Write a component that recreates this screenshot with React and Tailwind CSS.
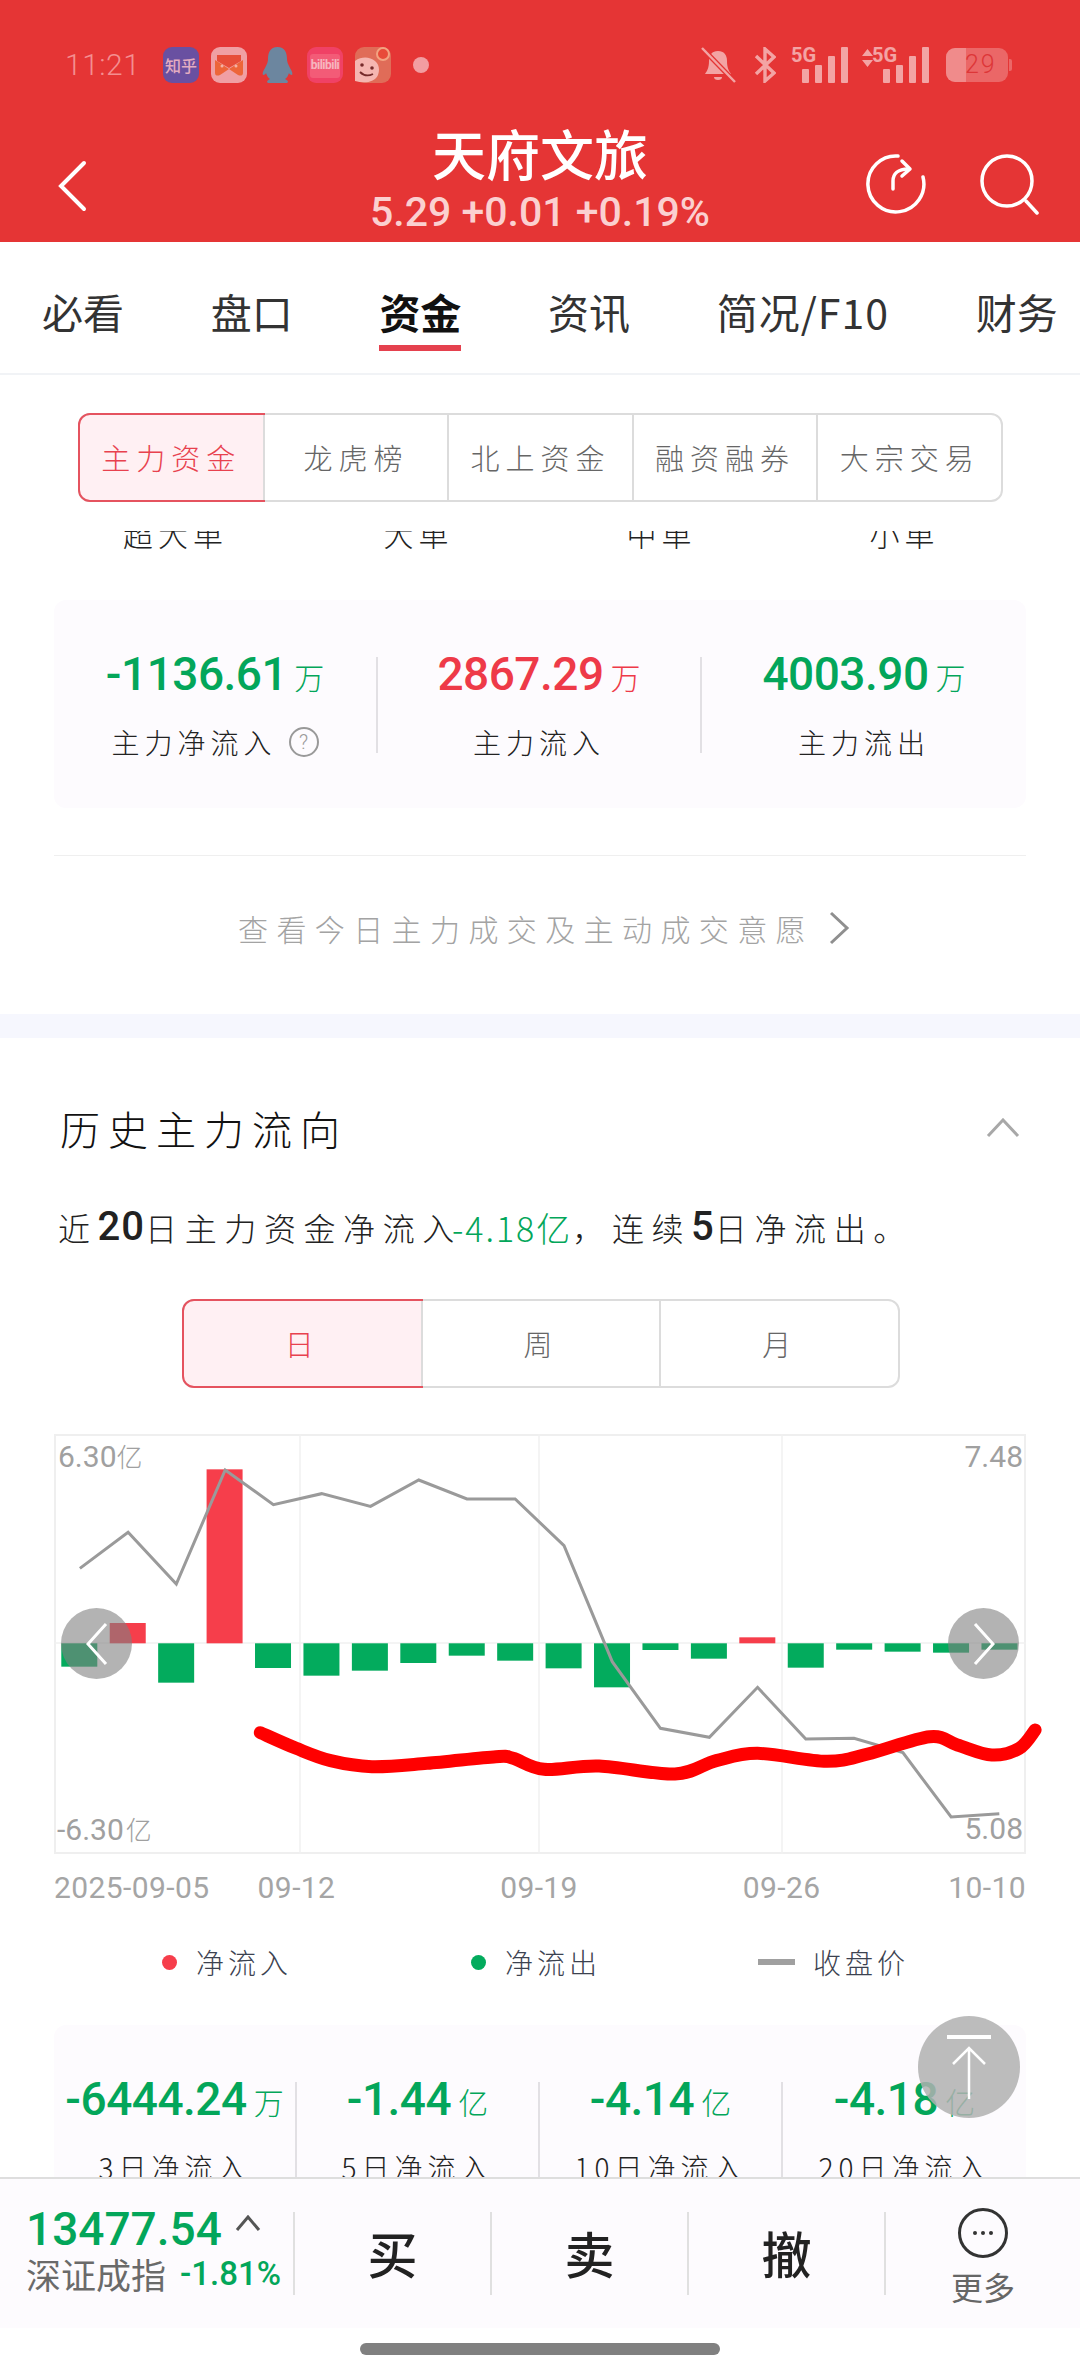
import React from "react";

const cjk = "font-['Noto_Sans_CJK_SC',sans-serif]";
const num = "font-['Roboto','Noto_Sans_CJK_SC',sans-serif]";

// reference coordinates of the chart, mapped into the chart box
const toChart = ([x, y]) => [x / 1.452 - 54, y / 3 - 14];

const bars = [
  ["g", 740], ["r", 609], ["g", 788], ["r", 148], ["g", 744], ["g", 767], ["g", 752],
  ["g", 729], ["g", 707], ["g", 722], ["g", 745], ["g", 802], ["g", 690], ["g", 716],
  ["r", 652], ["g", 743], ["g", 689], ["g", 695], ["g", 698], ["g", 689],
];

const priceLine = [
  [116, 445], [186, 337], [256, 492], [327, 150], [397, 254], [467, 221], [538, 259],
  [608, 180], [678, 237], [748, 237], [819, 377], [889, 725], [959, 925], [1030, 952],
  [1100, 802], [1170, 957], [1240, 955], [1311, 998], [1381, 1191], [1451, 1181],
];

const scribble = [
  [378, 938], [430, 985], [480, 1022], [540, 1040], [620, 1030], [720, 1010], [745, 1015],
  [790, 1048], [870, 1038], [980, 1062], [1040, 1022], [1100, 1000], [1200, 1024],
  [1260, 1002], [1350, 950], [1390, 975], [1440, 1005], [1480, 985], [1503, 930],
];

function smoothPath(points) {
  const p = points.map(toChart);
  let d = `M${p[0][0]} ${p[0][1]}`;
  for (let i = 0; i < p.length - 1; i++) {
    const a = p[i - 1] || p[i];
    const b = p[i];
    const c = p[i + 1];
    const e = p[i + 2] || c;
    d += ` C${b[0] + (c[0] - a[0]) / 6} ${b[1] + (c[1] - a[1]) / 6} ${c[0] - (e[0] - b[0]) / 6} ${c[1] - (e[1] - b[1]) / 6} ${c[0]} ${c[1]}`;
  }
  return d;
}

function Segmented({ items, w }) {
  return (
    <div className={`flex h-[89px] ${w} rounded-[12px] border-2 border-[#dcdcdc]`}>
      {items.map((item, i) => (
        <div
          key={item}
          className={`flex flex-1 items-center justify-center text-[29px] font-light tracking-[6px] ${
            i === 0
              ? "-m-[2px] rounded-l-[12px] border-2 border-[#e5535f] bg-[#fff0f3] text-[#e8414e]"
              : "border-l-2 border-[#dcdcdc] text-[#666]"
          } ${i === 1 ? "border-l-0" : ""}`}
        >
          {item}
        </div>
      ))}
    </div>
  );
}

function Stat({ value, unit, label, color, divider, help }) {
  return (
    <div className={`flex h-[96px] flex-col items-center ${divider ? "border-r-2 border-[#e2e0e4]" : ""}`}>
      <div className={`flex h-[34px] items-center ${color}`}>
        <span className={`${num} text-[46px] font-medium tracking-[-0.5px]`}>{value}</span>
        <span className="ml-[7px] mt-[4px] text-[30px] font-light">{unit}</span>
      </div>
      <div className="mt-[35px] flex h-[32px] items-center whitespace-nowrap text-[28px] font-light tracking-[5px] text-[#222]">
        {label}
        {help && (
          <span className={`${num} ml-[12px] flex h-[30px] w-[30px] items-center justify-center rounded-full border-2 border-[#999] text-[20px] tracking-normal text-[#999]`}>
            ?
          </span>
        )}
      </div>
    </div>
  );
}

function Signal({ className }) {
  return (
    <div className={`relative h-[36px] w-[51px] ${className}`}>
      <span className={`${num} absolute -left-[6px] -top-[3px] text-[20px] font-bold leading-[22px] text-white`}>5G</span>
      <div className="absolute bottom-0 right-0 flex items-end gap-[6px]">
        <div className="h-[14px] w-[7px] rounded-[1px] bg-white" />
        <div className="h-[18px] w-[7px] rounded-[1px] bg-white" />
        <div className="h-[27px] w-[7px] rounded-[1px] bg-white" />
        <div className="h-[36px] w-[7px] rounded-[1px] bg-white" />
      </div>
    </div>
  );
}

function StatusIcons() {
  return (
    <div className="flex h-[36px] items-center opacity-55">
      <svg width="36" height="36" viewBox="0 0 36 36" fill="#fff">
        <path d="M18 4c-6 0-9 4-9 10 0 7-2 10-4 13h26c-2-3-4-6-4-13 0-6-3-10-9-10z" />
        <path d="M14 30h8a4 3 0 0 1-8 0z" />
        <path d="M2 1 35 35" stroke="#e53535" strokeWidth="5" />
        <path d="M2 1 35 35" stroke="#fff" strokeWidth="2.5" />
      </svg>
      <svg className="ml-[18px]" width="22" height="36" viewBox="0 0 22 36" fill="none" stroke="#fff" strokeWidth="3.4">
        <path d="M2 9l18 17-9 8V2l9 8L2 27" />
      </svg>
      <Signal className="ml-[21px]" />
      <svg className="mb-[14px] ml-[14px]" width="11" height="18" viewBox="0 0 11 18" fill="#fff">
        <path d="M5.5 0 11 7H0zM5.5 18 0 11h11z" />
      </svg>
      <Signal className="ml-[5px]" />
      <div className="relative ml-[17px] flex h-[34px] w-[62px] overflow-hidden rounded-[9px] bg-white/45">
        <div className="h-full w-[20px] bg-white/60" />
        <span className={`${num} absolute left-[19px] top-[2px] text-[25px] font-light leading-[30px] tracking-[2px] text-[#d8383c]`}>29</span>
      </div>
      <div className="ml-[1px] h-[12px] w-[3px] rounded-r-[2px] bg-white/45" />
    </div>
  );
}

function AppIcons() {
  return (
    <div className="ml-[29px] flex h-[36px] items-center opacity-90">
      <div className="flex h-[36px] w-[36px] items-center justify-center rounded-[9px] bg-[#5c53ad] text-[16px] font-medium leading-none text-[#e3b9d0]">知乎</div>
      <svg className="ml-[12px]" width="36" height="36" viewBox="0 0 36 36">
        <rect width="36" height="36" rx="9" fill="#f2abb0" />
        <path d="M6 8h24v6L18 21 6 14z" fill="#e8503a" />
        <path d="M4 13l14 9 14-9v13c0 3-3 3-5 2l-9-6-9 6c-2 1-5 1-5-2z" fill="#ee6b3a" />
        <circle cx="11" cy="19" r="1.500" fill="#f7c0b0" />
        <circle cx="25" cy="19" r="1.500" fill="#f7c0b0" />
      </svg>
      <svg className="ml-[15px]" width="31" height="36" viewBox="0 0 31 36" fill="#5f8fab">
        <path d="M15.5 0C8 0 6 6 6 12c0 3-1 5-3 9-2 3-3 6-2 7 1 0 3-1 3-2 1 3 2 5 4 6-2 1-3 2-3 3 0 1 2 1 5 1h11c3 0 5 0 5-1s-1-2-3-3c2-1 3-3 4-6 0 1 2 2 3 2 1-1 0-4-2-7-2-4-3-6-3-9 0-6-2-12-9.500-12z" />
      </svg>
      <div className="relative ml-[14px] flex h-[36px] w-[36px] items-center justify-center overflow-hidden rounded-[9px] bg-[#f2436b]">
        <div className="absolute inset-x-[3px] bottom-[5px] top-[7px] rounded-[3px] bg-[#f5607f]" />
        <span className={`${num} relative text-[12px] font-bold leading-none tracking-[-0.5px] text-[#f9c4cf]`}>bilibili</span>
      </div>
      <svg className="ml-[12px]" width="36" height="36" viewBox="0 0 36 36">
        <rect width="36" height="36" rx="9" fill="#e0735c" />
        <circle cx="28" cy="7" r="6" fill="#e94e3a" stroke="#f5b08a" strokeWidth="2" />
        <path d="M0 14c7-5 15-4 20 0 4 3 5 9 3 14-3 7-13 9-23 6z" fill="#f7c4bf" />
        <circle cx="7" cy="18" r="1.800" fill="#6b2b2b" />
        <circle cx="17" cy="21" r="1.800" fill="#6b2b2b" />
        <path d="M5 25c4 4 9 4 13 2" stroke="#6b2b2b" strokeWidth="1.800" fill="none" />
      </svg>
      <div className="ml-[22px] h-[16px] w-[16px] rounded-full bg-[#f4a9ad]" />
    </div>
  );
}

function Header() {
  return (
    <div className={`h-[242px] bg-[#e53535] ${cjk}`}>
      <div className="flex justify-between pl-[65px] pr-[68px] pt-[47px]">
        <div className="flex">
          <span className={`${num} w-[69px] whitespace-nowrap text-[30px] font-light leading-[36px] tracking-[0.5px] text-[#f48e90]`}>11:21</span>
          <AppIcons />
        </div>
        <StatusIcons />
      </div>
      <div className="mt-[38px] grid grid-cols-[1fr_auto_1fr]">
        <div className="mt-[39px] pl-[56px]">
          <svg width="32" height="52" viewBox="0 0 32 52" fill="none" stroke="#fff" strokeWidth="4" strokeLinecap="round">
            <path d="M28 3 5 26l23 23" />
          </svg>
        </div>
        <div className="flex flex-col items-center">
          <div className="h-[64px] text-[54px] font-medium leading-[64px] text-white">天府文旅</div>
          <div className={`${num} mt-[5px] h-[44px] text-[41px] font-medium leading-[44px] text-[#fbd0d0]`}>5.29 +0.01 +0.19%</div>
        </div>
        <div className="mt-[32px] flex justify-end gap-[52px] pr-[39px]">
          <svg width="62" height="62" viewBox="0 0 62 62" fill="none" stroke="#fff" strokeWidth="3.500" strokeLinecap="round" strokeLinejoin="round">
            <path d="M33 3A28 28 0 1 0 58 24" />
            <path d="M28 36V28c0-7 5-12 15-12" />
            <path d="M37 8l8 8-8 7" />
          </svg>
          <svg width="62" height="62" viewBox="0 0 62 62" fill="none" stroke="#fff" strokeWidth="3.500" strokeLinecap="round">
            <circle cx="28" cy="28" r="25" />
            <path d="M47 48l11 12" />
          </svg>
        </div>
      </div>
    </div>
  );
}

function Tabs() {
  const tabs = ["必看", "盘口", "资金", "资讯", "简况/F10", "财务"];
  return (
    <div className={`flex h-[133px] gap-[86.7px] overflow-hidden whitespace-nowrap border-b-2 border-[#f1f3f6] pl-[42px] pt-[44px] ${cjk}`}>
      {tabs.map((t) => (
        <div key={t} className="flex flex-col items-center">
          <div className={`h-[50px] text-[41px] leading-[50px] ${t === "资金" ? "font-bold text-[#111]" : "text-[#333]"} ${t === "简况/F10" ? "tracking-[1px]" : ""}`}>{t}</div>
          {t === "资金" && <div className="mt-[9px] h-[6px] w-[82px] bg-[#e5414e]" />}
        </div>
      ))}
    </div>
  );
}

function FundsToday() {
  return (
    <div className="pb-[8px] pt-[38px]">
      <div className="ml-[78px]">
        <Segmented items={["主力资金", "龙虎榜", "北上资金", "融资融券", "大宗交易"]} w="w-[925px]" />
      </div>
      <div className="mx-[54px] mt-[29px] grid h-[20px] grid-cols-4 overflow-hidden text-center text-[30px] font-light leading-[34px] tracking-[5px] text-[#222]">
        <div className="-mt-[15px]">超大单</div>
        <div className="-mt-[15px]">大单</div>
        <div className="-mt-[15px]">中单</div>
        <div className="-mt-[15px]">小单</div>
      </div>
      <div className="mx-[54px] mt-[49px] grid h-[208px] grid-cols-3 rounded-[12px] bg-[#fdfbfe] pt-[57px]">
        <Stat value="-1136.61" unit="万" label="主力净流入" color="text-[#03a65a]" divider help />
        <Stat value="2867.29" unit="万" label="主力流入" color="text-[#ee3a48]" divider />
        <Stat value="4003.90" unit="万" label="主力流出" color="text-[#03a65a]" />
      </div>
      <div className="mx-[54px] mt-[47px] h-[1px] bg-[#efefef]" />
      <div className="flex h-[146px] items-center justify-center pb-[2px] pl-[8px] text-[30px] font-light tracking-[8.4px] text-[#a3a3a3]">
        查看今日主力成交及主动成交意愿
        <svg className="ml-[14px]" width="22" height="34" viewBox="0 0 22 34" fill="none" stroke="#8f8f8f" strokeWidth="3">
          <path d="M3 2l16 15L3 32" />
        </svg>
      </div>
      <div className="h-[4px]" />
    </div>
  );
}

function NavButton({ right }) {
  return (
    <div className={`absolute top-[172px] flex h-[71px] w-[71px] items-center justify-center rounded-full bg-[#808080]/60 ${right ? "left-[892px]" : "left-[5px]"}`}>
      <svg width="22" height="42" viewBox="0 0 22 42" fill="none" stroke="#fff" strokeWidth="3">
        <path d={right ? "M2 1l18 20L2 41" : "M20 1 2 21l18 20"} />
      </svg>
    </div>
  );
}

function Chart() {
  const linePoints = priceLine.map(toChart).map((p) => p.join(",")).join(" ");
  const axisLabel = `${num} absolute text-[30px] leading-[30px] text-[#a0a0a0]`;
  return (
    <div className="relative mx-[54px] mt-[46px] h-[420px] border-2 border-[#efefef]">
      <svg className="absolute -left-[2px] -top-[2px] overflow-visible" width="972" height="420" viewBox="0 0 972 420">
        {[246, 485, 728].map((x) => (
          <line key={x} x1={x} y1="0" x2={x} y2="420" stroke="#f0f0f0" strokeWidth="1.500" />
        ))}
        <line x1="0" y1="209" x2="972" y2="209" stroke="#f0f0f0" strokeWidth="1.500" />
        {bars.map(([c, end], i) => {
          const x = 7.3 + i * 48.43;
          const [, y] = toChart([0, end]);
          const top = Math.min(y, 209.3);
          return <rect key={i} x={x} y={top} width="36" height={Math.abs(y - 209.3)} fill={c === "g" ? "#03ab5d" : "#f63e4b"} />;
        })}
        <polyline points={linePoints} fill="none" stroke="#9a9a9a" strokeWidth="3" />
        <path d={smoothPath(scribble)} fill="none" stroke="#ff0000" strokeWidth="13" strokeLinecap="round" strokeLinejoin="round" />
      </svg>
      <NavButton />
      <NavButton right />
      <div className={`${axisLabel} left-[2px] top-[6px]`}>6.30<span className="text-[26px] font-light">亿</span></div>
      <div className={`${axisLabel} right-[1px] top-[6px]`}>7.48</div>
      <div className={`${axisLabel} bottom-[6px] left-[1px]`}>-6.30<span className="ml-[2px] text-[26px] font-light">亿</span></div>
      <div className={`${axisLabel} bottom-[8px] right-[1px]`}>5.08</div>
    </div>
  );
}

function History() {
  return (
    <div>
      <div className="mt-[70px] flex h-[40px] items-center justify-between pl-[60px] pr-[60px]">
        <div className="text-[40px] font-light leading-[40px] tracking-[8px] text-[#111]">历史主力流向</div>
        <svg width="34" height="20" viewBox="0 0 34 20" fill="none" stroke="#a8a8a8" strokeWidth="3">
          <path d="M2 18 17 2l15 16" />
        </svg>
      </div>
      <div className="mt-[59px] flex h-[40px] items-center whitespace-nowrap pl-[58px] text-[32px] font-light tracking-[7.6px] text-[#222]">
        近<span className={`${num} text-[40px] font-medium tracking-[1px]`}>20</span>日主力资金净流入
        <span className="-ml-[10px] text-[34px] tracking-[2px] text-[#03a65a]">-4.18亿</span>，连续<span className={`${num} text-[40px] font-medium tracking-[1px]`}>5</span>日净流出。
      </div>
      <div className="ml-[182px] mt-[52px]">
        <Segmented items={["日", "周", "月"]} w="w-[718px]" />
      </div>
      <Chart />
      <div className={`${num} mx-[54px] mt-[20px] flex h-[28px] whitespace-nowrap text-[30px] leading-[28px] tracking-[0.4px] text-[#a5a5a5]`}>
        <div className="w-[204px]">2025-09-05</div>
        <div className="w-[243px]">09-12</div>
        <div className="w-[243px]">09-19</div>
        <div className="w-[206px]">09-26</div>
        <div>10-10</div>
      </div>
      <div className="ml-[162px] mt-[45px] flex h-[30px] items-center text-[28px] font-light tracking-[4px] text-[#3c4250]">
        <div className="flex w-[309px] items-center gap-[19px]"><div className="h-[15px] w-[15px] rounded-full bg-[#f63e4b]" />净流入</div>
        <div className="flex w-[287px] items-center gap-[19px]"><div className="h-[15px] w-[15px] rounded-full bg-[#03ab5d]" />净流出</div>
        <div className="flex items-center gap-[18px]"><div className="h-[6px] w-[37px] bg-[#a0a0a0]" />收盘价</div>
      </div>
      <div className="mx-[54px] mt-[48px] grid h-[200px] grid-cols-4 rounded-[12px] bg-[#fdfbfe] pt-[57px]">
        <Stat value="-6444.24" unit="万" label="3日净流入" color="text-[#03a65a]" divider />
        <Stat value="-1.44" unit="亿" label="5日净流入" color="text-[#03a65a]" divider />
        <Stat value="-4.14" unit="亿" label="10日净流入" color="text-[#03a65a]" divider />
        <Stat value="-4.18" unit="亿" label="20日净流入" color="text-[#03a65a]" />
      </div>
    </div>
  );
}

function Footer() {
  return (
    <div className={`h-[151px] shrink-0 border-t-2 border-[#dedede] bg-[#fdfbfe] pt-[33px] ${cjk}`}>
      <div className="flex h-[83px]">
        <div className="w-[293px] pl-[26px]">
          <div className="-mt-[3px] flex h-[40px] items-center text-[#03a65a]">
            <span className={`${num} text-[46px] font-medium leading-[40px]`}>13477.54</span>
            <svg className="mb-[12px] ml-[13px]" width="26" height="16" viewBox="0 0 26 16" fill="none" stroke="#555" strokeWidth="3">
              <path d="M2 15 13 2l11 13" />
            </svg>
          </div>
          <div className="mt-[3px] flex h-[44px] items-center">
            <span className="text-[35px] leading-[44px] text-[#6a6a6a]">深证成指</span>
            <span className={`${num} ml-[14px] text-[33px] font-medium leading-[44px] text-[#03a65a]`}>-1.81%</span>
          </div>
        </div>
        {["买", "卖", "撤"].map((t) => (
          <div key={t} className="flex w-[197px] items-center justify-center border-l-2 border-[#e0e0e0] pb-[3px] text-[50px] font-medium text-[#222]">{t}</div>
        ))}
        <div className="flex flex-1 flex-col items-center border-l-2 border-[#e0e0e0]">
          <div className="-mt-[4px] flex h-[50px] w-[50px] shrink-0 items-center justify-center gap-[4px] rounded-full border-[3px] border-[#333]">
            <div className="h-[4px] w-[4px] rounded-full bg-[#333]" />
            <div className="h-[4px] w-[4px] rounded-full bg-[#333]" />
            <div className="h-[4px] w-[4px] rounded-full bg-[#333]" />
          </div>
          <div className="mt-[8px] shrink-0 text-[32px] leading-[40px] text-[#666]">更多</div>
        </div>
      </div>
    </div>
  );
}

export default function App() {
  return (
    <div className={`relative flex h-[2376px] w-[1080px] flex-col overflow-hidden bg-white ${cjk}`}>
      <Header />
      <Tabs />
      <div className="min-h-0 flex-1 overflow-hidden">
        <FundsToday />
        <div className="h-[24px] bg-[#f6f7fe]" />
        <History />
      </div>
      <Footer />
      <div className="flex h-[48px] shrink-0 justify-center bg-white pt-[15px]">
        <div className="h-[12px] w-[360px] rounded-full bg-[#808080]" />
      </div>
      {/* back to top */}
      <div className="absolute left-[918px] top-[2016px] flex h-[102px] w-[102px] items-center justify-center rounded-full bg-[#b0b0b0]/85">
        <svg width="46" height="64" viewBox="0 0 46 64" fill="none" stroke="#fff" strokeWidth="2.500">
          <path d="M1 2h44" strokeWidth="4" />
          <path d="M23 14v50M7 29 23 13l16 16" />
        </svg>
      </div>
    </div>
  );
}
